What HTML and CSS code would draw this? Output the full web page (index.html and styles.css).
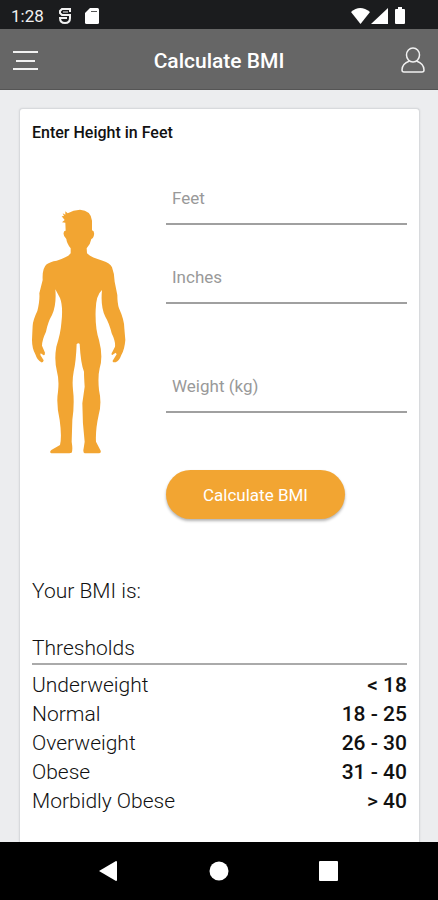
FILE: index.html
```html
<!DOCTYPE html>
<html lang="en">
<head>
    <meta charset="UTF-8">
    <meta name="viewport" content="width=device-width, initial-scale=1.0">
    <title>Calculate BMI</title>
    <link rel="stylesheet" href="styles.css">
</head>
<body>
<div class="status-bar">
    <span class="clock">1:28</span>
    <svg class="status-icon" width="14" height="18" viewBox="0 0 14 18" fill="none" stroke="#f1f1f1" stroke-width="2">
        <path d="M12 5V2H4L2 4V6L4 8H12V11C12 14 10 16 7 16S2 14 2 11H9"/>
        <path stroke-width="1" d="M5 5H10"/>
    </svg>
    <svg class="status-icon" width="14" height="16" viewBox="0 0 14 16">
        <path fill="#fff" d="M5 0H12.500Q14 0 14 1.500V14.500Q14 16 12.500 16H1.500Q0 16 0 14.500V5Z"/>
        <path stroke="#555" d="M6 3.500H12"/>
    </svg>
    <svg class="signals" width="56" height="18" viewBox="0 0 56 18" fill="#fff">
        <path d="M0 5Q9-3 19 5L9.500 17Z"/>
        <path d="M20 17L37 1V17Z"/>
        <path d="M47 0H51V2H53Q54 2 54 3V16Q54 17 53 17H45Q44 17 44 16V3Q44 2 45 2H47Z"/>
    </svg>
</div>

<header class="header">
    <button class="icon-btn" aria-label="Menu">
        <svg width="26" height="22" viewBox="0 0 26 22" stroke="#f1f1f1" stroke-width="2">
            <path d="M1 2H26M4 11H23M1 19H26"/>
        </svg>
    </button>
    <h1>Calculate BMI</h1>
    <button class="icon-btn" aria-label="Profile">
        <svg width="26" height="28" viewBox="0 0 26 28" fill="none" stroke="#f1f1f1" stroke-width="1.500">
            <ellipse cx="13" cy="8" rx="6.500" ry="7"/>
            <path d="M9.500 14C4 16 2 19 2 23Q2 25 4 25H22Q24 25 24 23C24 19 22 16 16.500 14"/>
        </svg>
    </button>
</header>

<main>
    <div class="card">
        <h2>Enter Height in Feet</h2>
        <div class="form-area">
            <svg class="figure" viewBox="36 27 282 738" fill="#f2a532">
                <path d="M128 40L136 44L136 34L143 40Q160 30 180 29Q213 31 216 62L216 91Q224 92 222 105Q220 116 214 117Q212 131 200 145L201 160Q212 172 248 182Q270 188 276 202Q283 220 284 245L292 285Q292 310 297 325Q313 360 313 385L316 420Q314 448 304 465Q298 482 287 487Q276 487 278 482L290 463L287 458L277 465Q272 463 277 456L285 440Q287 425 275 400Q268 370 256 350Q241 320 246 270Q228 285 227 330Q225 385 237 420Q250 470 239 505Q233 530 237 570Q246 610 236 645Q226 690 228 725L242 752Q244 760 236 760H194Q188 757 191 745L194 725Q187 670 187 610L194 560Q192 530 192 515Q182 490 179 432Q176 427 170 432Q168 485 161 515Q156 540 159 570Q164 610 157 660L155 725Q159 750 155 758L148 760H94Q87 757 94 750L120 735Q126 710 119 660Q108 610 114 575Q118 540 111 515Q102 480 109 440Q122 400 124 370Q130 320 120 294L106 268Q110 315 96 345Q84 365 78 395Q66 420 66 437L75 458Q75 466 71 466L62 460L61 465L71 481Q70 488 64 487Q52 482 46 463Q36 445 36 420Q37 395 38 377Q39 360 52 333Q60 300 58 280L68 240Q66 205 80 193Q90 185 110 182Q145 171 152 160V145Q140 130 139 117Q129 108 131 98Q132 91 137 92L136 68L126 67L134 60L125 49L132 48Z"/>
            </svg>
            <form class="fields" id="bmiForm">
                <input type="text" id="feetInput" inputmode="decimal" aria-label="Feet" placeholder="Feet">
                <input type="text" id="inchesInput" inputmode="decimal" aria-label="Inches" placeholder="Inches">
                <input type="text" id="weightInput" class="weight" inputmode="decimal" aria-label="Weight (kg)" placeholder="Weight (kg)">
                <button type="submit" class="calculate-btn">Calculate BMI</button>
            </form>
        </div>

        <p class="result">Your BMI is: <output id="bmiResult" form="bmiForm"></output></p>

        <table>
            <caption>Thresholds</caption>
            <tbody>
            <tr><th scope="row">Underweight</th><td>&lt; 18</td></tr>
            <tr><th scope="row">Normal</th><td>18 - 25</td></tr>
            <tr><th scope="row">Overweight</th><td>26 - 30</td></tr>
            <tr><th scope="row">Obese</th><td>31 - 40</td></tr>
            <tr><th scope="row">Morbidly Obese</th><td>&gt; 40</td></tr>
            </tbody>
        </table>
    </div>
</main>

<nav class="nav-bar">
    <button aria-label="Back">
        <svg width="20" height="20" viewBox="0 0 20 20" fill="#fff"><path d="M0 10L17 0Q18 0 18 1V19Q18 20 17 20Z"/></svg>
    </button>
    <button aria-label="Home">
        <svg width="20" height="20" viewBox="0 0 20 20" fill="#fff"><circle cx="10" cy="10" r="9.500"/></svg>
    </button>
    <button aria-label="Recent apps">
        <svg width="20" height="20" viewBox="0 0 20 20" fill="#fff"><rect width="19" height="20" rx="1"/></svg>
    </button>
</nav>
<script>
    document.addEventListener("DOMContentLoaded", function () {
        const bmiForm = document.getElementById("bmiForm");
        const bmiResult = document.getElementById("bmiResult");

        bmiForm.addEventListener("submit", function (event) {
            event.preventDefault();
            const feet = Number(document.getElementById("feetInput").value);
            const inches = Number(document.getElementById("inchesInput").value);
            const weight = Number(document.getElementById("weightInput").value);
            const meters = (feet * 12 + inches) * 0.0254;

            if (meters > 0 && weight > 0) {
                bmiResult.textContent = (weight / (meters * meters)).toFixed(1);
            }
        });
    });
</script>
</body>
</html>
```
FILE: styles.css
```css
* {
    box-sizing: border-box;
}

body {
    font-family: Roboto, "Liberation Sans", sans-serif;
    background-color: #ecedef;
    color: #111;
    height: 100vh;
    margin: 0;
    display: flex;
    flex-direction: column;
}

button {
    font-family: inherit;
    border: none;
    background: none;
    padding: 0;
    cursor: pointer;
}

svg {
    display: block;
}

.status-bar {
    flex: none;
    display: flex;
    align-items: center;
    height: 29px;
    padding: 2px 31px 0 11px;
    background-color: #1b1c1e;
    color: #f1f1f1;
}

.clock {
    font-size: 17px;
    margin-right: 14px;
}

.status-icon {
    margin-right: 13px;
}

.signals {
    margin-left: auto;
}

.header {
    flex: none;
    display: flex;
    align-items: center;
    justify-content: space-between;
    height: 61px;
    padding: 4px 12px 0;
    background-color: #666;
    border-bottom: 1px solid #555;
    color: #fff;
}

.header h1 {
    font-size: 21px;
    font-weight: 500;
    margin: 0;
}

main {
    flex: 1;
    min-height: 0;
    padding: 18px 18px 0 19px;
    overflow: hidden;
}

.card {
    min-height: 100%;
    padding: 14px 12px 24px;
    background-color: #fff;
    border: 1px solid #d8dadd;
    border-bottom: none;
    border-radius: 4px 4px 0 0;
    box-shadow: 0 0 2px rgba(0, 0, 0, 0.1);
}

h2 {
    font-size: 16px;
    line-height: 20px;
    font-weight: 500;
    margin: 0 0 28px;
}

.form-area {
    display: flex;
    gap: 40px;
}

.figure {
    flex: none;
    width: 94px;
    height: 246px;
    margin-top: 38px;
}

.fields {
    flex: 1;
    min-width: 0;
    display: flex;
    flex-direction: column;
    align-items: flex-start;
}

.fields input {
    width: 100%;
    height: 54px;
    margin-bottom: 25px;
    padding: 2px 6px 0;
    border: none;
    border-bottom: 2px solid #a0a0a0;
    border-radius: 0;
    background: none;
    outline: none;
    font-family: inherit;
    font-size: 17px;
}

.fields input::placeholder {
    color: #999;
}

.fields .weight {
    margin-top: 30px;
    margin-bottom: 57px;
}

.calculate-btn {
    height: 49px;
    padding: 0 37px;
    border-radius: 25px;
    background-color: #f2a532;
    box-shadow: 0 2px 3px rgba(0, 0, 0, 0.3);
    color: #fff;
    font-size: 17px;
}

.result {
    margin: 60px 0 31px;
    font-size: 21px;
    line-height: 24px;
    font-weight: 300;
}

table {
    width: 100%;
    border-collapse: collapse;
    font-size: 21px;
    line-height: 29px;
}

caption {
    margin-bottom: 6px;
    border-bottom: 2px solid #aaa;
    font-weight: 300;
    text-align: left;
}

th, td {
    padding: 0;
    font-weight: 300;
    text-align: left;
}

td {
    font-weight: 500;
    text-align: right;
}

.nav-bar {
    flex: none;
    display: flex;
    justify-content: center;
    align-items: center;
    gap: 90px;
    height: 58px;
    background-color: #000;
}
```
